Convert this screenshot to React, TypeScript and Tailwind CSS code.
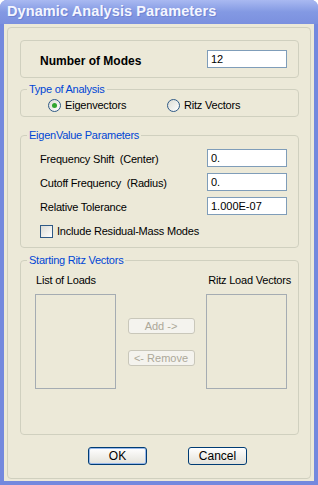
import React from "react";

const font = { fontFamily: '"Liberation Sans", Arial, sans-serif' };

const XpInput = ({ value }: { value: string }) => (
  <div className="w-[80px] h-[18px] border border-[#7f9db9] bg-white pl-[3px] text-[11px] leading-[16px] text-black">
    {value}
  </div>
);

const Radio = ({ checked, label }: { checked?: boolean; label: string }) => (
  <div className="flex items-center">
    <div className="w-[13px] h-[13px] rounded-full border border-[#2f5a86] bg-gradient-to-br from-[#dcdcd4] to-white flex items-center justify-center">
      {checked && <div className="w-[5px] h-[5px] rounded-full bg-[#2fa52f]" />}
    </div>
    <span className="ml-[4px] text-[11px] tracking-[-0.2px] leading-[13px]">{label}</span>
  </div>
);

const Group = ({ title, children }: { title: string; children: React.ReactNode }) => (
  <fieldset className="border border-[#d0d0bf] rounded-[4px]">
    <legend className="ml-[6px] px-[2px] text-[11px] leading-[13px] tracking-[-0.25px] text-[#0046d5]">{title}</legend>
    {children}
  </fieldset>
);

const Button = ({ label, disabled, isDefault }: { label: string; disabled?: boolean; isDefault?: boolean }) => (
  <div
    className={
      disabled
        ? "w-[67px] h-[16px] rounded-[3px] border border-[#c9c7ba] bg-[#f4f3ee] text-[#aca899] text-[11px] leading-[14px] text-center"
        : isDefault
        ? "w-[59px] h-[18px] rounded-[3px] border border-[#003c74] bg-gradient-to-b from-white to-[#e3e2da] text-black text-[12px] leading-[16px] text-center shadow-[inset_0_0_0_1px_#98b8ea]"
        : "w-[59px] h-[18px] rounded-[3px] border border-[#003c74] bg-gradient-to-b from-white to-[#e3e2da] text-black text-[12px] leading-[16px] text-center"
    }
  >
    {label}
  </div>
);

export default function App() {
  return (
    <div style={font} className="w-[318px] h-[485px] bg-[#7489de] rounded-t-[7px] flex flex-col overflow-hidden text-black">
      <div className="h-[26px] bg-gradient-to-b from-[#a9b9f1] via-[#8399e3] to-[#7b90df] flex items-center pl-[7px]">
        <span className="text-[#f4f6ff] font-bold text-[14.5px] tracking-[0.1px] [text-shadow:1px_1px_0_#7083d2]">
          Dynamic Analysis Parameters
        </span>
      </div>
      <div className="flex-1 mx-[4px] mb-[4px] bg-[#ece9d8] pt-[3px] px-[3px] pb-[2px] flex">
        <div className="flex-1 border border-[#d0d0bf] rounded-[4px] pt-[12px] pl-[12px] pr-[11px] pb-[13px] flex flex-col">
          <div className="h-[38px] border border-[#d0d0bf] rounded-[4px] flex items-center justify-between pl-[19px] pr-[11px]">
            <span className="font-bold text-[12px] leading-[14px] pt-[3px]">Number of Modes</span>
            <XpInput value="12" />
          </div>

          <div className="mt-[5px]">
            <Group title="Type of Analysis">
              <div className="flex pt-[3px] pb-[4px] pl-[27px]">
                <div className="w-[119px]">
                  <Radio checked label="Eigenvectors" />
                </div>
                <Radio label="Ritz Vectors" />
              </div>
            </Group>
          </div>

          <div className="mt-[12px]">
            <Group title="EigenValue Parameters">
              <div className="pt-[7px] pb-[9px] pl-[19px] pr-[11px] flex flex-col">
                {[
                  ["Frequency Shift  (Center)", "0."],
                  ["Cutoff Frequency  (Radius)", "0."],
                  ["Relative Tolerance", "1.000E-07"],
                ].map(([label, v], i) => (
                  <div key={label} className={"flex items-center justify-between" + (i > 0 ? " mt-[6px]" : "")}>
                    <span className="text-[11px] leading-[13px] tracking-[-0.2px] whitespace-pre pt-[3px]">{label}</span>
                    <XpInput value={v} />
                  </div>
                ))}
                <div className="flex items-center mt-[10px]">
                  <div className="w-[13px] h-[13px] border border-[#2f5a86] bg-gradient-to-br from-[#dcdcd4] to-white" />
                  <span className="ml-[4px] text-[11px] tracking-[-0.2px] leading-[13px]">Include Residual-Mass Modes</span>
                </div>
              </div>
            </Group>
          </div>

          <div className="mt-[6px]">
            <Group title="Starting Ritz Vectors">
              <div className="pt-[7px] pb-[45px] pl-[14px] pr-[11px]">
                <div className="flex justify-between text-[11px] leading-[13px] tracking-[-0.2px]">
                  <span className="ml-[1px]">List of Loads</span>
                  <span className="-mr-[4px]">Ritz Load Vectors</span>
                </div>
                <div className="flex mt-[7px]">
                  <div className="w-[81px] h-[95px] border border-[#a5acb2] bg-[#ece9d8]" />
                  <div className="flex-1 flex flex-col items-center pt-[24px] gap-[16px]">
                    <Button label="Add ->" disabled />
                    <Button label="<- Remove" disabled />
                  </div>
                  <div className="w-[81px] h-[95px] border border-[#a5acb2] bg-[#ece9d8]" />
                </div>
              </div>
            </Group>
          </div>

          <div className="mt-[12px] flex pl-[68px] gap-[41px]">
            <Button label="OK" isDefault />
            <Button label="Cancel" />
          </div>
        </div>
      </div>
    </div>
  );
}
